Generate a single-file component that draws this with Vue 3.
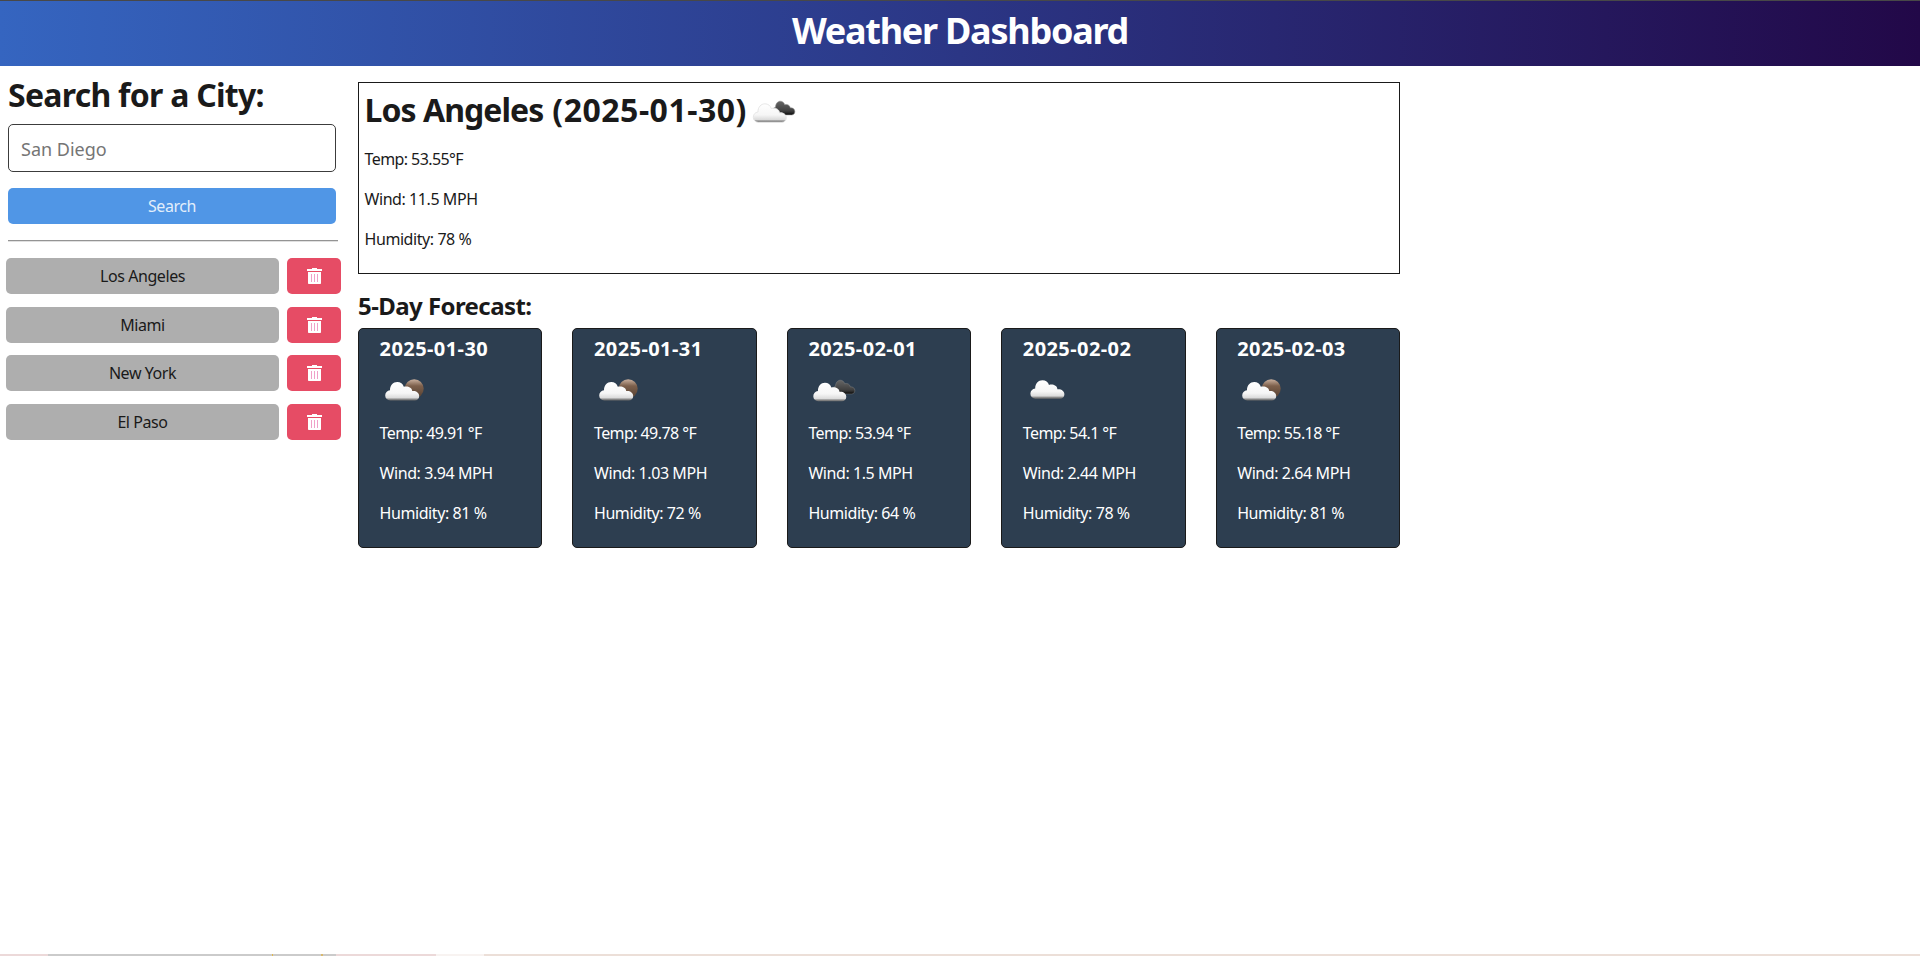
<script setup>
const cities = ['Los Angeles', 'Miami', 'New York', 'El Paso']
const days = [
  { date: '2025-01-30', icon: 'moon', temp: '49.91', wind: '3.94', humidity: 81 },
  { date: '2025-01-31', icon: 'moon', temp: '49.78', wind: '1.03', humidity: 72 },
  { date: '2025-02-01', icon: 'broken', temp: '53.94', wind: '1.5', humidity: 64 },
  { date: '2025-02-02', icon: 'cloud', temp: '54.1', wind: '2.44', humidity: 78 },
  { date: '2025-02-03', icon: 'moon', temp: '55.18', wind: '2.64', humidity: 81 },
]
const puff =
  'M5 18.5A5 5 0 0 1 0 13.5C0 10.5 2 8.5 4.8 8.2C4.6 3.5 8 0 12 0C15.3 0 17.8 2 18.6 4.8C22 3.6 26.8 5.2 27 9C31 8.6 34 10.8 34 14C34 16.8 32 18.5 29.5 18.5Z'
</script>

<template>
  <div class="page">
    <svg class="defs" width="0" height="0">
      <defs>
        <linearGradient id="white" x1="0" y1="0" x2="0" y2="1">
          <stop offset="0" stop-color="#fff" />
          <stop offset=".6" stop-color="#f6f6f6" />
          <stop offset=".85" stop-color="#dcdcdc" />
          <stop offset=".93" stop-color="#8c8c8c" />
          <stop offset="1" stop-color="#6a6a6a" />
        </linearGradient>
        <linearGradient id="dark" x1="0" y1="0" x2="0" y2="1">
          <stop offset="0" stop-color="#666" />
          <stop offset=".7" stop-color="#404040" />
          <stop offset=".85" stop-color="#282828" />
          <stop offset="1" stop-color="#050505" />
        </linearGradient>
        <linearGradient id="moon" x1="0" y1="0" x2="0" y2="1">
          <stop offset="0" stop-color="#c9b09e" />
          <stop offset=".35" stop-color="#7d604c" />
          <stop offset="1" stop-color="#543f30" />
        </linearGradient>
      </defs>
    </svg>

    <header class="top"><h1>Weather Dashboard</h1></header>

    <div class="layout">
      <aside class="side">
        <form class="search" @submit.prevent>
          <h2>Search for a City:</h2>
          <input type="text" placeholder="San Diego" />
          <button class="go" type="submit">Search</button>
        </form>
        <hr />
        <ul class="history">
          <li v-for="c in cities" :key="c">
            <button class="city" type="button">{{ c }}</button>
            <button class="del" type="button" aria-label="Delete">
              <svg width="15" height="16" viewBox="0 0 15 16">
                <path fill="#fff" d="M5 0h5v1h5v2H0V1h5zM1 4h13v11.2q0 .8-.8.8H1.8q-.8 0-.8-.8z" />
                <path stroke="#f0a0c8" d="M4.5 6v8M7.5 6v8M10.5 6v8" />
              </svg>
            </button>
          </li>
        </ul>
      </aside>

      <main class="main">
        <section class="today">
          <h2>
            <span class="name">Los Angeles</span>
            <span class="date">(2025-01-30)</span>
            <svg class="wx" width="50" height="50" viewBox="0 0 50 50">
              <g transform="translate(24.4 15.2) scale(.66 .74)">
                <path :d="puff" fill="url(#dark)" stroke="#8a8a8a" stroke-width=".8" />
              </g>
              <g transform="translate(5.3 17.8) scale(.97 1)">
                <path :d="puff" fill="url(#white)" stroke="#e6e6e6" stroke-width="1" />
              </g>
            </svg>
          </h2>
          <p class="temp">Temp: 53.55°F</p>
          <p>Wind: 11.5 MPH</p>
          <p>Humidity: 78 %</p>
        </section>

        <h3>5-Day Forecast:</h3>
        <div class="cards">
          <article v-for="d in days" :key="d.date" class="card">
            <h4>{{ d.date }}</h4>
            <svg class="wx" width="50" height="50" viewBox="0 0 50 50">
              <template v-if="d.icon === 'moon'">
                <circle cx="34.2" cy="23.8" r="9.5" fill="url(#moon)" />
                <g transform="translate(5.2 17)"><path :d="puff" fill="url(#white)" /></g>
              </template>
              <template v-else-if="d.icon === 'broken'">
                <g transform="translate(24.4 15.2) scale(.66 .74)">
                  <path :d="puff" fill="url(#dark)" stroke="#8a8a8a" stroke-width=".6" />
                </g>
                <g transform="translate(5.3 17.8) scale(.97 1)"><path :d="puff" fill="url(#white)" /></g>
              </template>
              <g v-else transform="translate(7.4 15.2)"><path :d="puff" fill="url(#white)" /></g>
            </svg>
            <p class="temp">Temp: {{ d.temp }} °F</p>
            <p>Wind: {{ d.wind }} MPH</p>
            <p>Humidity: {{ d.humidity }} %</p>
          </article>
        </div>
      </main>
    </div>
    <footer class="strip"></footer>
  </div>
</template>

<style>
body { margin: 0; background: #fff; }
</style>

<style scoped>
.page {
  height: 956px;
  display: flex;
  flex-direction: column;
  overflow: hidden;
  color: #1a1a1a;
  font: 16px/24px "Noto Sans", "Open Sans", sans-serif;
  letter-spacing: -0.43px;
}
.defs { position: absolute; }
h1, h2, h3, h4, p, ul { margin: 0; padding: 0; }
button, input { font: inherit; letter-spacing: inherit; box-sizing: border-box; border: 0; padding: 0; }
.top {
  box-sizing: border-box;
  flex: none;
  height: 66px;
  padding-top: 8px;
  border-top: 1px solid #484848;
  background: linear-gradient(to right, #3565c0, #2b3685 50%, #220848);
  color: #fff;
  text-align: center;
}
.top h1 { font-size: 36px; line-height: 43px; letter-spacing: -1.25px; }
.layout { flex: 1; display: flex; }
.side { width: 341px; margin-right: 17px; }
.search { padding: 9px 5px 0 8px; display: flex; flex-direction: column; }
.search h2 { font-size: 32px; line-height: 39px; white-space: nowrap; letter-spacing: -0.73px; }
.search input {
  height: 48px;
  margin-top: 10px;
  padding: 2px 12px 0;
  border: 1px solid #3c3c3c;
  border-radius: 5px;
  font-size: 18px;
  letter-spacing: 0;
}
.search input::placeholder { color: #757575; opacity: 1; }
.go { height: 36px; margin-top: 16px; border-radius: 5px; background: #5096e6; color: #e2eefb; }
hr { margin: 16px 3px 16.1px 8px; border: 0; height: 1px; background: #949494; border-bottom: 1px solid #e0e0e0; }
.history { list-style: none; padding-left: 6px; }
.history li { display: flex; gap: 8px; height: 36.4px; margin-bottom: 12.1px; }
.city { width: 273px; border-radius: 5px; background: #aeaeae; color: #1a1a1a; }
.del { width: 54px; border-radius: 5px; background: #e64c65; display: flex; align-items: center; justify-content: center; }
.main { width: 1042px; padding-top: 16px; }
.today { box-sizing: border-box; height: 192px; padding: 0 5.5px; border: 1px solid #1a1a1a; }
.today h2 { display: flex; align-items: flex-start; height: 56px; font-size: 32px; line-height: 54px; }
.today h2 .name { letter-spacing: -0.95px; margin-right: 9px; }
.today h2 .date { letter-spacing: 0.5px; }
.today h2 .wx { margin: 3px 0 0 1px; }
.today p { height: 40px; line-height: 40px; }
.main h3 { margin-top: 17px; font-size: 24px; line-height: 30px; padding-bottom: 7px; letter-spacing: -0.57px; }
.cards { display: grid; grid-template-columns: repeat(5, 1fr); gap: 30px; }
.card {
  box-sizing: border-box;
  height: 220px;
  padding: 5px 0 0 20.6px;
  border: 1px solid #1a1a1a;
  border-radius: 5px;
  background: #2d3e50;
  color: #fff;
}
.card h4 { font-size: 20px; line-height: 29px; letter-spacing: 0.42px; }
.card .wx { display: block; margin: 2px 0 -2px; }
.card p { line-height: 40px; white-space: nowrap; }
.today .temp, .card .temp { letter-spacing: -0.58px; }
.strip {
  flex: none;
  height: 2px;
  background: linear-gradient(to right, #ecd9d9 48px, #cbcbcb 48px 272px, #e2b84c 272px 273px, #cbcbcb 273px 321px, #d9b96e 321px 323px, #cbcbcb 323px 336px, #ecd9d9 336px 436px, #f8f3f1 436px 484px, #ecdfd8 484px);
}
</style>
